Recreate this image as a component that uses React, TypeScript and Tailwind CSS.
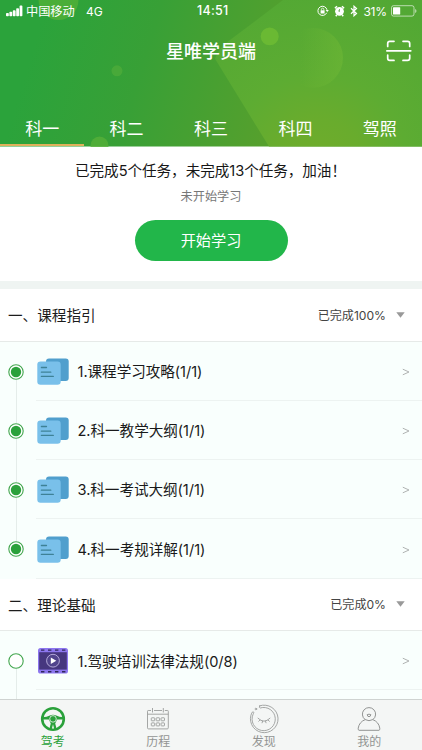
import React from "react";

const FONT = "font-['Inter','Noto_Sans_CJK_SC',sans-serif]";

function HeaderArt() {
  return (
    <svg className="absolute inset-0 h-full w-full" viewBox="0 0 422 147" preserveAspectRatio="none" aria-hidden="true">
      <defs>
        <linearGradient id="base" gradientUnits="userSpaceOnUse" x1="35" y1="40" x2="270" y2="110">
          <stop offset="0" stopColor="#2ba33b" />
          <stop offset="0.45" stopColor="#38a036" />
          <stop offset="1" stopColor="#55a02d" />
        </linearGradient>
        <radialGradient id="facet" gradientUnits="userSpaceOnUse" cx="318" cy="165" r="180">
          <stop offset="0" stopColor="#70ac2b" />
          <stop offset="0.25" stopColor="#69ac2d" />
          <stop offset="0.5" stopColor="#5dac32" />
          <stop offset="1" stopColor="#52a834" />
        </radialGradient>
        <linearGradient id="moon" x1="0" x2="1" y1="0" y2="0">
          <stop offset="0.3" stopColor="#6eb735" stopOpacity="0" />
          <stop offset="1" stopColor="#6eb735" stopOpacity="0.6" />
        </linearGradient>
      </defs>
      <rect width="422" height="147" fill="url(#base)" />
      <path d="M283 0H422V147H269L215 59Q218 51 225 44Z" fill="url(#facet)" />
      <circle cx="58.5" cy="0" r="20" fill="#5bb338" opacity="0.65" />
      <circle cx="117" cy="71" r="5.5" fill="#55af3b" opacity="0.6" />
      <circle cx="99.5" cy="146" r="9" fill="#56b038" opacity="0.8" />
      <circle cx="269.7" cy="36.5" r="9" fill="#6ab933" />
      <circle cx="313" cy="58" r="30" fill="url(#moon)" />
    </svg>
  );
}

function StatusBar() {
  return (
    <div className="relative flex h-[22px] items-center pl-[6px] pr-[5.5px] text-[12px] leading-none text-white">
      <svg width="17" height="12" viewBox="0 0 17 12" fill="white">
        <rect x="0" y="8" width="2.8" height="3.2" rx="0.8" />
        <rect x="3.4" y="6.8" width="2.8" height="4.4" rx="0.8" />
        <rect x="6.8" y="5.2" width="2.8" height="6" rx="0.8" />
        <rect x="10.2" y="3.2" width="2.8" height="8" rx="0.8" />
        <rect x="13.6" y="0.6" width="2.8" height="10.6" rx="0.8" />
      </svg>
      <span className="ml-[3px] w-[60px] whitespace-nowrap pt-[2px] text-[12.2px]">中国移动</span>
      <span className="pt-px text-[12px]">4G</span>
      <span className="absolute left-[197px] pt-px text-[12.5px] font-medium tracking-[0.3px]">14:51</span>
      <span className="ml-auto flex items-center">
        <svg width="12" height="12" viewBox="0 0 12 12" fill="none" stroke="white">
          <path d="M9.7 7.8A4.6 4.6 0 1 1 10 4.8" strokeWidth="1" />
          <path d="M8.6 5L11.8 5L10.3 7.1Z" fill="white" stroke="none" />
          <rect x="3.6" y="5.3" width="4" height="3.2" fill="white" stroke="none" />
          <path d="M4.4 5.4V4.4A1.2 1.2 0 0 1 6.8 4.4V5.4" strokeWidth="0.8" />
        </svg>
        <svg className="ml-[5px]" width="11" height="12" viewBox="0 0 11 12">
          <circle cx="5.5" cy="6.3" r="4.4" fill="white" />
          <path d="M0.9 3.2L3 1.3M10.1 3.2L8 1.3M2.7 10L1.8 11.2M8.3 10L9.2 11.2" stroke="white" strokeWidth="1.5" />
          <path d="M5.5 4V6.5L4.1 5.7" stroke="#4da235" strokeWidth="0.7" fill="none" />
        </svg>
        <svg className="ml-[5px]" width="8" height="12" viewBox="0 0 8 12" fill="none" stroke="white" strokeWidth="1.2">
          <path d="M1 3.3L6.5 8.5L4 10.8V1.2L6.5 3.5L1 8.7" />
        </svg>
        <span className="ml-[6px] w-[24px] whitespace-nowrap pt-px text-[12px] tracking-[-0.3px]">31%</span>
        <svg className="ml-[3px]" width="26" height="12" viewBox="0 0 26 12">
          <rect x="0.5" y="0.7" width="22.5" height="10.4" rx="2" fill="none" stroke="white" strokeOpacity="0.6" />
          <rect x="2" y="2.2" width="7.2" height="7.4" rx="0.6" fill="white" />
          <path d="M24.1 4V8Q25.5 7.3 25.5 6T24.1 4Z" fill="white" fillOpacity="0.6" />
        </svg>
      </span>
    </div>
  );
}

const subjects = ["科一", "科二", "科三", "科四", "驾照"];

function Header() {
  return (
    <header className="relative h-[146.5px] shrink-0 overflow-hidden text-white">
      <HeaderArt />
      <StatusBar />
      <div className="relative flex h-[59px] items-center justify-center">
        <h1 className="pt-px text-[18px] font-medium leading-none">星唯学员端</h1>
        <svg className="absolute right-[10px] top-[18px]" width="26" height="23" viewBox="0 0 26 23" fill="none" stroke="white" strokeWidth="1.7" strokeLinecap="round">
          <path d="M1.7 6.5V3.4Q1.7 1.3 3.8 1.3H8M17 1.3H21.5Q23.7 1.3 23.7 3.4V6.5M1.7 15V18.2Q1.7 20.4 3.8 20.4H8M17 20.4H21.5Q23.7 20.4 23.7 18.2V15M0.8 10.8H24.8" />
        </svg>
      </div>
      <nav className="relative mt-[28px] grid h-[37px] grid-cols-5">
        {subjects.map((s, i) => (
          <div
            key={s}
            className={`flex items-center justify-center border-b-2 pt-[5px] text-[17px] leading-none ${i === 0 ? "border-[#e0b15c]" : "border-transparent"}`}
          >
            {s}
          </div>
        ))}
      </nav>
    </header>
  );
}

function Summary() {
  return (
    <section className="flex h-[134.5px] shrink-0 flex-col items-center bg-white">
      <p className="mt-[14px] whitespace-nowrap pr-px text-[14.6px] leading-[20px] tracking-[-0.05px] text-[#161616]">
        已完成5个任务，未完成13个任务，加油！
      </p>
      <p className="mt-[7px] text-[12.2px] leading-[18px] text-[#777]">未开始学习</p>
      <button className="mt-[14px] h-[41px] w-[153px] rounded-full bg-[#22b64a] pt-[2px] text-[15.2px] leading-none text-white">
        开始学习
      </button>
    </section>
  );
}

function SectionHead({ title, progress }: { title: string; progress: string }) {
  return (
    <div className="flex h-[52.5px] items-center border-b border-[#e6eae8] bg-white pl-[8px] pr-[17px]">
      <h2 className="pt-[3px] text-[14.6px] leading-none text-[#1c1c1c]">{title}</h2>
      <span className="ml-auto pt-[2px] text-[12.1px] leading-none text-[#444]">{progress}</span>
      <svg className="ml-[10px]" width="9" height="6" viewBox="0 0 9 6">
        <path d="M0.3 0.3H8.7L4.5 5.7Z" fill="#999" />
      </svg>
    </div>
  );
}

function DocIcon() {
  return (
    <svg className="mt-[2px]" width="32" height="28" viewBox="0 0 32 28">
      <rect x="9" y="0.5" width="22.7" height="22.6" rx="3" fill="#509fcd" />
      <rect x="0.3" y="3.6" width="23.4" height="23.2" rx="3.2" fill="#79c0ea" />
      <path d="M4.4 9.5H9.5M4.4 14.2H13.8M4.4 18.4H16.3" stroke="#3e8196" strokeWidth="1.3" strokeLinecap="round" />
    </svg>
  );
}

function FilmIcon() {
  return (
    <svg className="mt-[2px]" width="32" height="28" viewBox="0 0 32 28">
      <rect x="1" y="1" width="30" height="25.6" rx="2.6" fill="#8d77ee" />
      <rect x="2.2" y="5.2" width="27.6" height="17.4" fill="#46377f" />
      <path d="M4 3.1H29M4 24.7H29" stroke="#30275c" strokeWidth="1.4" strokeDasharray="3.4 3.6" />
      <circle cx="16" cy="13.7" r="6.4" fill="#51448c" stroke="#cbc3ec" strokeWidth="0.8" />
      <path d="M13.8 10.5L19.3 13.7L13.8 16.9Z" fill="white" />
    </svg>
  );
}

type Lesson = { title: string; done: boolean; film?: boolean };

function LessonRow({ lesson, first, last }: { lesson: Lesson; first: boolean; last: boolean }) {
  return (
    <li className="flex h-[59.3px] bg-[#f9fffd]">
      <div className="ml-[8px] flex w-4 flex-col items-center">
        <span className={`h-[22px] w-px shrink-0 ${first ? "" : "bg-[#e5edea]"}`} />
        <svg className="shrink-0" width="16" height="16" viewBox="0 0 16 16">
          <circle cx="8" cy="8" r="7.2" fill="#fff" stroke="#42a64e" strokeWidth="1.1" />
          {lesson.done && <circle cx="8" cy="8" r="5.2" fill="#2ba13b" />}
        </svg>
        <span className={`w-px flex-1 ${last ? "" : "bg-[#e5edea]"}`} />
      </div>
      <div className="ml-[12px] flex flex-1 items-center border-b border-[#edf3f1] pl-px pr-[12px]">
        {lesson.film ? <FilmIcon /> : <DocIcon />}
        <span className="ml-[8.5px] whitespace-nowrap pt-[3px] text-[14.6px] leading-none tracking-[-0.05px] text-[#1a1a1a]">
          {lesson.title}
        </span>
        <svg className="ml-auto mt-[2px]" width="8" height="8" viewBox="0 0 8 8" fill="none" stroke="#b0b3b2" strokeWidth="1">
          <path d="M0.8 1.2L7 4L0.8 6.8" />
        </svg>
      </div>
    </li>
  );
}

const guide: Lesson[] = [
  { title: "1.课程学习攻略(1/1)", done: true },
  { title: "2.科一教学大纲(1/1)", done: true },
  { title: "3.科一考试大纲(1/1)", done: true },
  { title: "4.科一考规详解(1/1)", done: true },
];

function WheelIcon() {
  return (
    <svg width="26" height="26" viewBox="0 0 26 26" fill="none" stroke="#2aa13b">
      <circle cx="13" cy="13" r="10.8" strokeWidth="2.6" />
      <path d="M2.5 11.2Q7 11 9.8 9.4Q13 8.2 16.2 9.4Q19 11 23.5 11.2V13.6H17.2L15.2 17.4L16.8 23.6H9.2L10.8 17.4L8.8 13.6H2.5Z" fill="#2aa13b" stroke="none" />
      <circle cx="13" cy="12.9" r="3.3" stroke="#f4f6f5" strokeWidth="0.8" />
      <path d="M11.9 22.4L13 18.2L14.1 22.4Z" fill="#f4f6f5" stroke="none" />
    </svg>
  );
}

function CalendarIcon() {
  return (
    <svg width="26" height="26" viewBox="0 0 26 26" fill="none" stroke="#9b9d9c" strokeWidth="0.9">
      <path d="M6 4.5H3.2Q2.5 4.5 2.5 5.3V21.8Q2.5 22.9 3.5 22.9H22.3Q23.3 22.9 23.3 21.8V5.3Q23.3 4.5 22.6 4.5H19.8M9 4.5H17M2.5 8.2H23.3M7.5 2V6.5M18.3 2V6.5" />
      {[6.3, 11.2, 16.1].map((x) => [11.8, 16.9].map((y) => <rect key={`${x}-${y}`} x={x} y={y} width="3.4" height="3" rx="0.5" />))}
    </svg>
  );
}

function DiscoverIcon() {
  return (
    <svg width="30" height="30" viewBox="0 0 30 30" fill="none" stroke="#9b9d9c" strokeWidth="0.9" strokeLinecap="round">
      <path d="M10.8 1.8A13.8 13.8 0 1 1 3.1 8.3Q4.2 7.3 5 8.6Q4.6 9.3 4.1 10.3A11.6 11.6 0 1 0 11.2 4Q9.5 3.7 10.8 1.8Z" />
      <circle cx="6.9" cy="5" r="0.8" />
      <path d="M9 14.2Q15 20.4 21 14.2M11 16L9.7 17.3M13.6 17.1L13.1 18.8M16.5 17.1L17 18.8M19 16L20.4 17.3" />
    </svg>
  );
}

function ProfileIcon() {
  return (
    <svg width="26" height="26" viewBox="0 0 26 26" fill="none" stroke="#929493" strokeWidth="1">
      <path d="M9.2 13.6A6.6 6.6 0 1 1 16.8 13.6Q22.8 16 23.8 22.2Q24 24.3 23 24.3H3Q2 24.3 2.2 22.2Q3.2 16 9.2 13.6Q13 15.8 16.8 13.6" />
      <path d="M11.2 8.6Q13 7.8 14.8 8.6Q14.6 10.7 13 10.7T11.2 8.6Z" />
    </svg>
  );
}

const tabs = [
  { label: "驾考", icon: <WheelIcon />, active: true },
  { label: "历程", icon: <CalendarIcon /> },
  { label: "发现", icon: <DiscoverIcon /> },
  { label: "我的", icon: <ProfileIcon /> },
];

function TabBar() {
  return (
    <nav className="grid h-[51px] shrink-0 grid-cols-4 border-t border-[#cfd3d1] bg-[#f4f6f5]">
      {tabs.map((t) => (
        <div key={t.label} className={`flex flex-col items-center ${t.active ? "text-[#2aa13b]" : "text-[#929493]"}`}>
          <span className="mt-[4px] flex h-[30px] items-center justify-center">{t.icon}</span>
          <span className="mt-px text-[12px] leading-[13px]">{t.label}</span>
        </div>
      ))}
    </nav>
  );
}

export default function App() {
  return (
    <div className={`flex h-[750px] w-[422px] flex-col overflow-hidden bg-[#f9fffd] ${FONT}`}>
      <Header />
      <Summary />
      <div className="h-[8px] shrink-0 bg-[#eff4f2]" />
      <main className="min-h-0 flex-1 overflow-hidden">
        <SectionHead title="一、课程指引" progress="已完成100%" />
        <ul>
          {guide.map((l, i) => (
            <LessonRow key={l.title} lesson={l} first={i === 0} last={i === guide.length - 1} />
          ))}
        </ul>
        <SectionHead title="二、理论基础" progress="已完成0%" />
        <ul>
          <LessonRow lesson={{ title: "1.驾驶培训法律法规(0/8)", done: false, film: true }} first last={false} />
          <li className="flex h-[20px] bg-[#f9fffd] pl-[8px]">
            <span className="flex w-4 justify-center">
              <span className="w-px bg-[#e5edea]" />
            </span>
          </li>
        </ul>
      </main>
      <TabBar />
    </div>
  );
}
